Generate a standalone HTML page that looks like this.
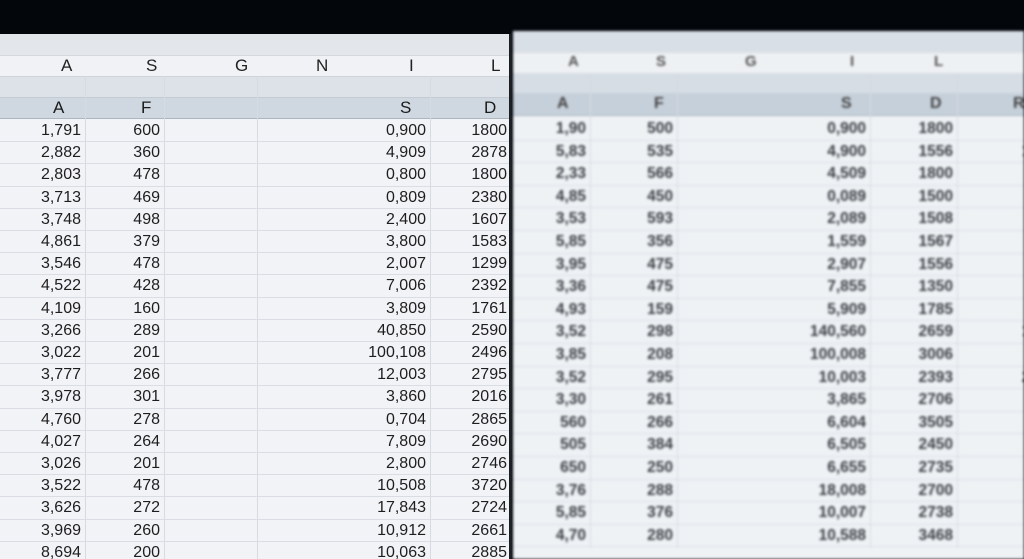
<!DOCTYPE html>
<html><head><meta charset="utf-8"><style>
*{margin:0;padding:0;box-sizing:border-box}
body{width:1024px;height:559px;overflow:hidden;background:#03060b;font-family:"Liberation Sans",sans-serif;position:relative}
.p{position:absolute;overflow:hidden}
#L{left:0;top:34px;width:511px;height:525px;background:#f1f3f6}
#R{left:513px;top:31px;width:511px;height:528px;background:#eff2f5;filter:blur(1.3px)}
.band{position:absolute;left:0;right:0}
.vl{position:absolute;width:1px;background:#d6dbe1}
table{position:absolute;border-collapse:collapse;left:0}
td{text-align:right;padding:0 4px 0 0;color:#1e1e1e;font-size:16px;border-bottom:1px solid #dadee4;white-space:nowrap}
#R td{color:#3a3d42;font-size:15.5px}
</style></head><body>
<div class="p" id="L">
 <div class="band" style="top:0;height:21px;background:#e3e7ec"></div>
 <div class="band" style="top:21px;height:21px;background:#f0f2f5;border-top:1px solid #d4d9df"></div>
 <div class="band" style="top:42px;height:21px;background:#dde2e8;border-top:1px solid #d0d5dc"></div>
 <div class="band" style="top:63px;height:22px;background:#cfd8e1;border-top:1px solid #c4cbd3;border-bottom:1px solid #aeb6c0"></div>
 <div style="position:absolute;top:22px;left:0;width:511px;height:20px;font-size:17px;color:#222">
  <span style="position:absolute;left:61px">A</span><span style="position:absolute;left:146px">S</span><span style="position:absolute;left:235px">G</span><span style="position:absolute;left:316px">N</span><span style="position:absolute;left:409px">I</span><span style="position:absolute;left:491px">L</span>
 </div>
 <div style="position:absolute;top:64px;left:0;width:511px;height:20px;font-size:17px;color:#1a1a1a">
  <span style="position:absolute;left:53px">A</span><span style="position:absolute;left:141px">F</span><span style="position:absolute;left:400px">S</span><span style="position:absolute;left:484px">D</span>
 </div>
 <div class="vl" style="left:85px;top:42px;height:500px"></div>
 <div class="vl" style="left:164px;top:42px;height:500px"></div>
 <div class="vl" style="left:257px;top:42px;height:500px"></div>
 <div class="vl" style="left:430px;top:42px;height:500px"></div>
 <table style="top:86px;width:511px">
 <colgroup><col style="width:85px"><col style="width:79px"><col style="width:93px"><col style="width:173px"><col style="width:81px"></colgroup>
 <tbody style="line-height:21.2px">
 <tr><td>1,791</td><td>600</td><td></td><td>0,900</td><td>1800</td></tr>
 <tr><td>2,882</td><td>360</td><td></td><td>4,909</td><td>2878</td></tr>
 <tr><td>2,803</td><td>478</td><td></td><td>0,800</td><td>1800</td></tr>
 <tr><td>3,713</td><td>469</td><td></td><td>0,809</td><td>2380</td></tr>
 <tr><td>3,748</td><td>498</td><td></td><td>2,400</td><td>1607</td></tr>
 <tr><td>4,861</td><td>379</td><td></td><td>3,800</td><td>1583</td></tr>
 <tr><td>3,546</td><td>478</td><td></td><td>2,007</td><td>1299</td></tr>
 <tr><td>4,522</td><td>428</td><td></td><td>7,006</td><td>2392</td></tr>
 <tr><td>4,109</td><td>160</td><td></td><td>3,809</td><td>1761</td></tr>
 <tr><td>3,266</td><td>289</td><td></td><td>40,850</td><td>2590</td></tr>
 <tr><td>3,022</td><td>201</td><td></td><td>100,108</td><td>2496</td></tr>
 <tr><td>3,777</td><td>266</td><td></td><td>12,003</td><td>2795</td></tr>
 <tr><td>3,978</td><td>301</td><td></td><td>3,860</td><td>2016</td></tr>
 <tr><td>4,760</td><td>278</td><td></td><td>0,704</td><td>2865</td></tr>
 <tr><td>4,027</td><td>264</td><td></td><td>7,809</td><td>2690</td></tr>
 <tr><td>3,026</td><td>201</td><td></td><td>2,800</td><td>2746</td></tr>
 <tr><td>3,522</td><td>478</td><td></td><td>10,508</td><td>3720</td></tr>
 <tr><td>3,626</td><td>272</td><td></td><td>17,843</td><td>2724</td></tr>
 <tr><td>3,969</td><td>260</td><td></td><td>10,912</td><td>2661</td></tr>
 <tr><td>8,694</td><td>200</td><td></td><td>10,063</td><td>2885</td></tr>
 </tbody></table>
 <div style="position:absolute;right:0;top:0;width:2px;height:525px;background:#1a1d22"></div>
</div>
<div class="p" id="R">
 <div class="band" style="top:0;height:22px;background:#d9dfe6"></div>
 <div class="band" style="top:22px;height:20px;background:#eef1f4"></div>
 <div class="band" style="top:42px;height:20px;background:#d6dde5"></div>
 <div class="band" style="top:62px;height:23px;background:#c6d0da;border-bottom:1px solid #aab3bd"></div>
 <div style="position:absolute;top:22px;left:0;width:511px;font-size:15px;color:#555;font-weight:bold">
  <span style="position:absolute;left:55px">A</span><span style="position:absolute;left:143px">S</span><span style="position:absolute;left:232px">G</span><span style="position:absolute;left:337px">I</span><span style="position:absolute;left:421px">L</span>
 </div>
 <div style="position:absolute;top:64px;left:0;width:511px;font-size:16px;color:#444;font-weight:bold">
  <span style="position:absolute;left:44px">A</span><span style="position:absolute;left:141px">F</span><span style="position:absolute;left:328px">S</span><span style="position:absolute;left:417px">D</span><span style="position:absolute;left:500px">R</span>
 </div>
 <div class="vl" style="left:77px;top:42px;height:475px"></div>
 <div class="vl" style="left:164px;top:42px;height:475px"></div>
 <div class="vl" style="left:357px;top:42px;height:475px"></div>
 <div class="vl" style="left:444px;top:42px;height:475px"></div>
 <table style="top:87px;width:530px;font-weight:bold">
 <colgroup><col style="width:77px"><col style="width:87px"><col style="width:193px"><col style="width:87px"><col style="width:86px"></colgroup>
 <tbody style="line-height:21.6px">
 <tr><td>1,90</td><td>500</td><td>0,900</td><td>1800</td><td>1</td></tr>
 <tr><td>5,83</td><td>535</td><td>4,900</td><td>1556</td><td>18</td></tr>
 <tr><td>2,33</td><td>566</td><td>4,509</td><td>1800</td><td>6</td></tr>
 <tr><td>4,85</td><td>450</td><td>0,089</td><td>1500</td><td>1</td></tr>
 <tr><td>3,53</td><td>593</td><td>2,089</td><td>1508</td><td>1</td></tr>
 <tr><td>5,85</td><td>356</td><td>1,559</td><td>1567</td><td>1</td></tr>
 <tr><td>3,95</td><td>475</td><td>2,907</td><td>1556</td><td>1</td></tr>
 <tr><td>3,36</td><td>475</td><td>7,855</td><td>1350</td><td>1</td></tr>
 <tr><td>4,93</td><td>159</td><td>5,909</td><td>1785</td><td>1</td></tr>
 <tr><td>3,52</td><td>298</td><td>140,560</td><td>2659</td><td>10</td></tr>
 <tr><td>3,85</td><td>208</td><td>100,008</td><td>3006</td><td>4</td></tr>
 <tr><td>3,52</td><td>295</td><td>10,003</td><td>2393</td><td>24</td></tr>
 <tr><td>3,30</td><td>261</td><td>3,865</td><td>2706</td><td>1</td></tr>
 <tr><td>560</td><td>266</td><td>6,604</td><td>3505</td><td>8</td></tr>
 <tr><td>505</td><td>384</td><td>6,505</td><td>2450</td><td>1</td></tr>
 <tr><td>650</td><td>250</td><td>6,655</td><td>2735</td><td>1</td></tr>
 <tr><td>3,76</td><td>288</td><td>18,008</td><td>2700</td><td>1</td></tr>
 <tr><td>5,85</td><td>376</td><td>10,007</td><td>2738</td><td>1</td></tr>
 <tr><td>4,70</td><td>280</td><td>10,588</td><td>3468</td><td>1</td></tr>
 </tbody></table>
</div>
</body></html>
